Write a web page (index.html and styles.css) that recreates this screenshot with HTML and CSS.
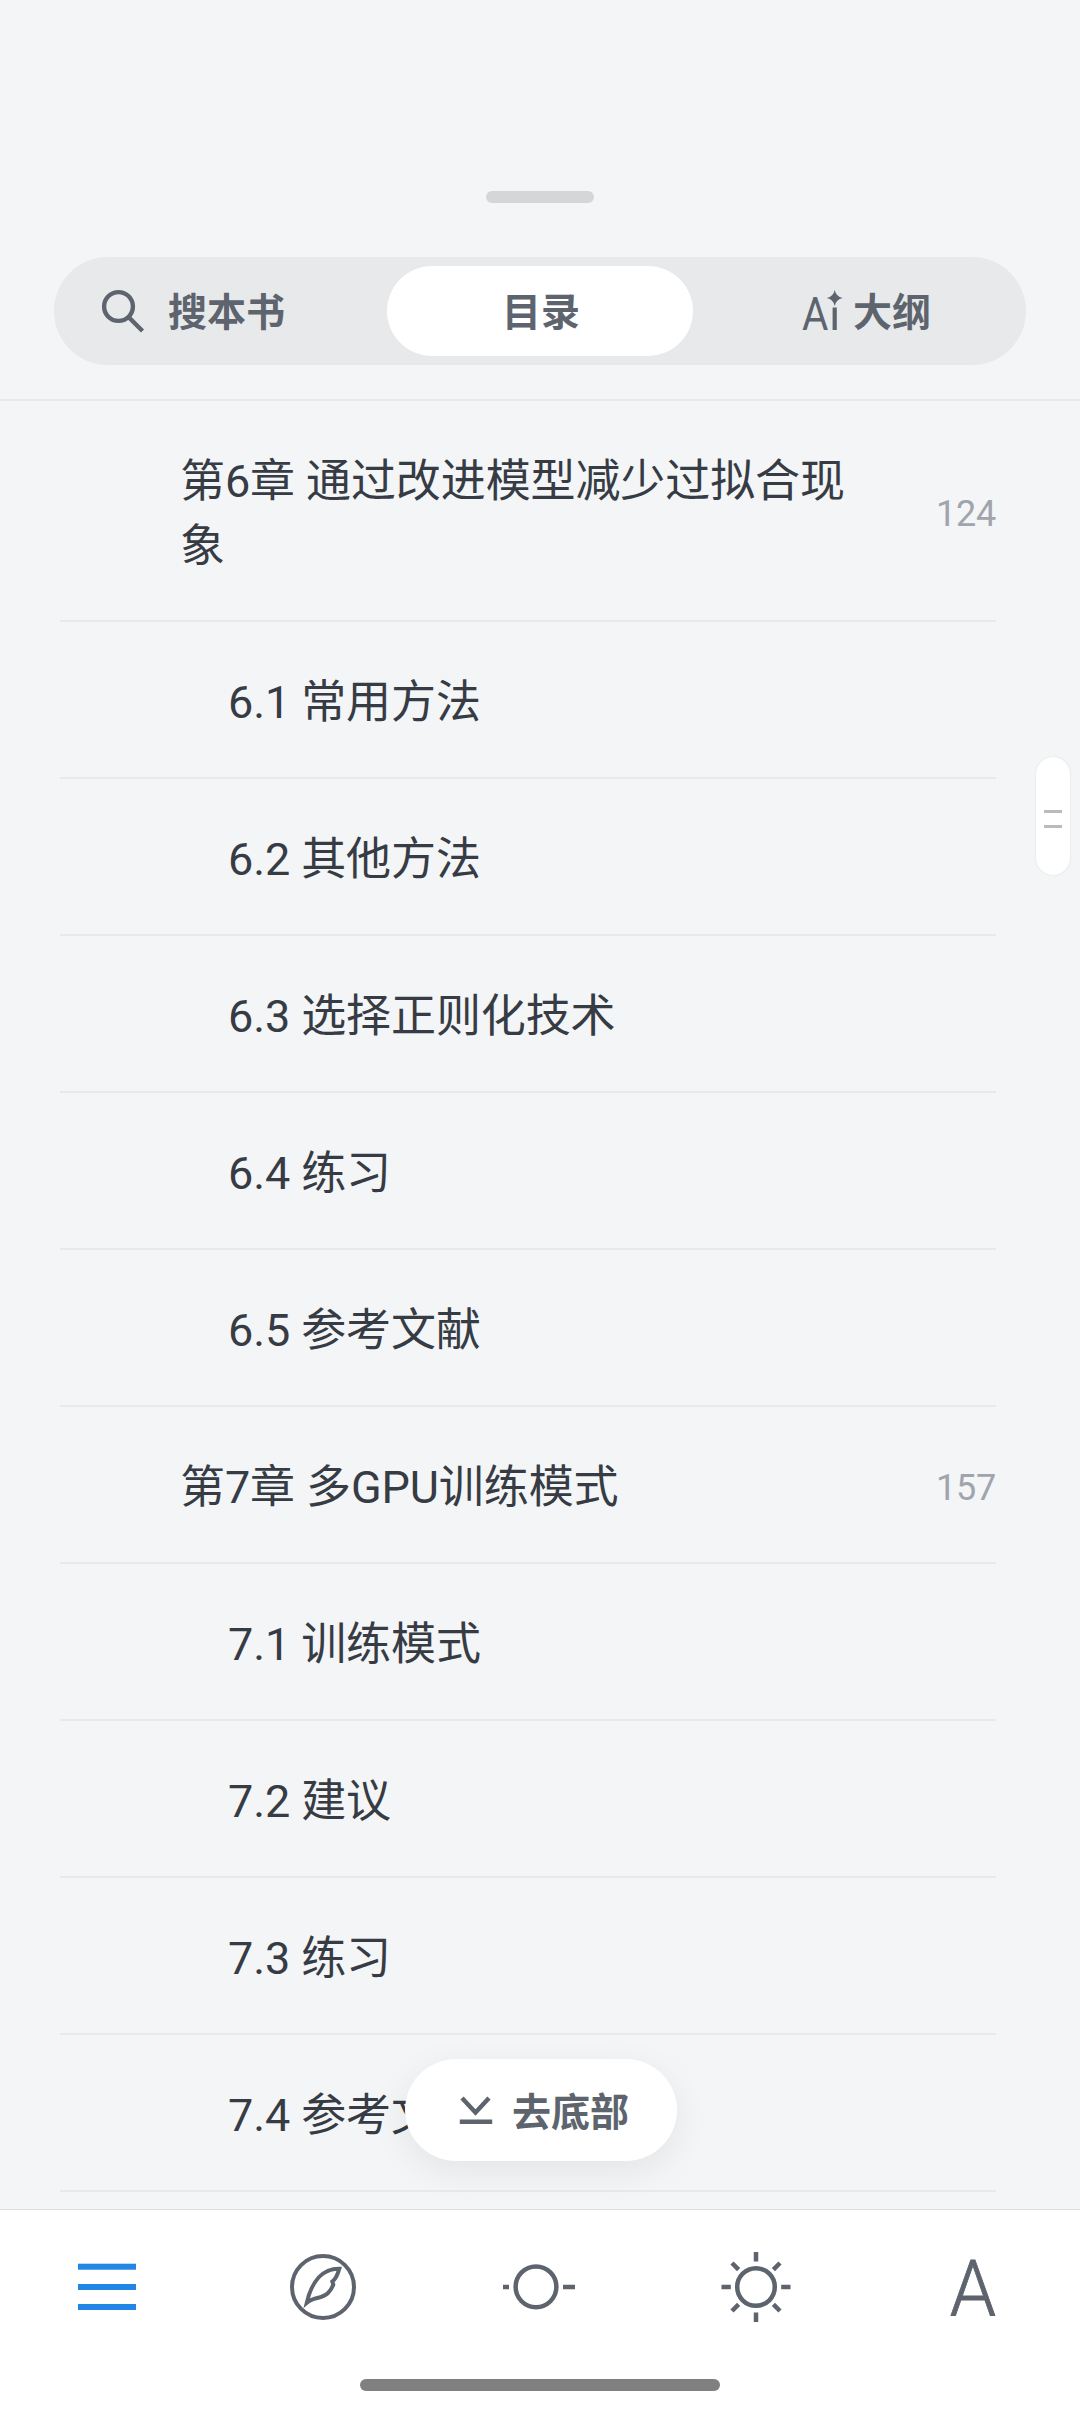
FILE: index.html
```html
<!DOCTYPE html>
<html lang="zh-CN">
<head>
    <meta charset="UTF-8">
    <meta name="viewport" content="width=device-width, initial-scale=1.0">
    <title>目录</title>
    <link rel="stylesheet" href="styles.css">
</head>
<body>

<div class="reader">
    <header class="panel-head">
        <div class="drag-bar"></div>
        <div class="tabs">
            <div class="tab tab-search">
                <svg width="44" height="44" viewBox="0 0 44 44" fill="none" stroke="currentColor" stroke-width="4.4">
                    <circle cx="17.5" cy="17.5" r="14.4"/>
                    <path d="M28 28.5L41.5 42"/>
                </svg>
                <span>搜本书</span>
            </div>
            <div class="tab tab-active"><span>目录</span></div>
            <div class="tab tab-outline">
                <svg width="42" height="42" viewBox="0 0 42 42" fill="currentColor">
                    <text class="ai-letter" transform="translate(14.3 40) scale(.86 1)" text-anchor="middle">A</text>
                    <rect x="31.6" y="17.5" width="4.2" height="22.5"/>
                    <path d="M33.7 0Q35 6.5 41.7 8Q35 9.5 33.7 16Q32.4 9.5 25.8 8Q32.4 6.5 33.7 0z"/>
                </svg>
                <span>大纲</span>
            </div>
        </div>
    </header>

    <main class="toc">
        <div class="toc-row chapter tall">
            <span class="title">第6章 通过改进模型减少过拟合现象</span>
            <span class="page">124</span>
        </div>
        <div class="toc-row section"><span class="title">6.1 常用方法</span></div>
        <div class="toc-row section"><span class="title">6.2 其他方法</span></div>
        <div class="toc-row section"><span class="title">6.3 选择正则化技术</span></div>
        <div class="toc-row section"><span class="title">6.4 练习</span></div>
        <div class="toc-row section"><span class="title">6.5 参考文献</span></div>
        <div class="toc-row chapter">
            <span class="title">第7章 多GPU训练模式</span>
            <span class="page">157</span>
        </div>
        <div class="toc-row section"><span class="title">7.1 训练模式</span></div>
        <div class="toc-row section"><span class="title">7.2 建议</span></div>
        <div class="toc-row section"><span class="title">7.3 练习</span></div>
        <div class="toc-row section"><span class="title">7.4 参考文献</span></div>
    </main>

    <nav class="toolbar">
        <div class="tool tool-on">
            <svg width="108" height="108" viewBox="0 0 108 108" fill="currentColor">
                <rect x="24" y="30.7" width="58" height="6"/>
                <rect x="24" y="51" width="58" height="6"/>
                <rect x="24" y="71" width="58" height="6"/>
            </svg>
        </div>
        <div class="tool">
            <svg width="108" height="108" viewBox="0 0 108 108" fill="none" stroke="currentColor" stroke-width="4">
                <circle cx="53" cy="54" r="31"/>
                <path d="M69.3 35.7C53.5 35.5 42 47 36.8 69.7C44 63.5 51 66.5 58 60C60.5 57.5 62.3 54.5 63.3 51.5L62.3 48.5C65 46.5 67 44 69.3 35.7z"/>
            </svg>
        </div>
        <div class="tool">
            <svg width="108" height="108" viewBox="0 0 108 108" fill="none" stroke="currentColor" stroke-width="4.5">
                <circle cx="50" cy="53.8" r="20.4"/>
                <path d="M17 54H23M77 54H89"/>
            </svg>
        </div>
        <div class="tool">
            <svg width="108" height="108" viewBox="0 0 108 108" fill="none" stroke="currentColor" stroke-width="4.5">
                <circle cx="54" cy="54" r="18.8"/>
                <path d="M54 19V28.5M54 79.5V89M19.5 54H28.8M79.2 54H88.5M30 30L36.6 36.6M71.4 71.4L78 78M30 78L36.6 71.4M71.4 36.6L78 30"/>
            </svg>
        </div>
        <div class="tool">
            <svg width="108" height="108" viewBox="0 0 108 108" fill="currentColor">
                <text class="font-letter" transform="translate(55 83) scale(.95 1)" text-anchor="middle">A</text>
            </svg>
        </div>
    </nav>
    <footer class="home">
        <div class="home-bar"></div>
    </footer>

    <div class="scroll-thumb"><i></i><i></i></div>

    <div class="to-bottom">
        <svg width="34" height="30" viewBox="0 0 34 30" fill="none" stroke="currentColor" stroke-width="4.4">
            <path d="M3 3L16.5 17.5L30 3M.8 26.7H33.2"/>
        </svg>
        <span>去底部</span>
    </div>
</div>

</body>
</html>
```
FILE: styles.css
```css
body {
    margin: 0;
    background: #f3f5f7;
    color: #363b44;
    font-family: Roboto, "Noto Sans CJK SC", sans-serif;
}

svg {
    flex: none;
    overflow: visible;
}

.reader {
    position: relative;
    display: flex;
    flex-direction: column;
    width: 1080px;
    height: 2412px;
    overflow: hidden;
}

/* header */
.panel-head {
    box-sizing: border-box;
    height: 401px;
    padding: 191px 54px 0;
    border-bottom: 2px solid #e8e9eb;
}
.drag-bar {
    width: 108px;
    height: 12px;
    margin: 0 auto 54px;
    border-radius: 6px;
    background: #d5d6d8;
}
.tabs {
    display: grid;
    grid-template-columns: 333px 306px 333px;
    align-items: center;
    height: 108px;
    border-radius: 54px;
    background: #e8e9eb;
}
.tab {
    display: flex;
    align-items: center;
    height: 90px;
    color: #5d646e;
    font-size: 39px;
    font-weight: 700;
}
.tab span {
    padding-bottom: 5px;
}
.tab-search {
    gap: 23px;
    padding-left: 47px;
}
.tab-active {
    justify-content: center;
    border-radius: 45px;
    background: #fff;
}
.tab-active span {
    padding-left: 2px;
}
.tab-outline {
    gap: 10px;
    padding-left: 108px;
}
.ai-letter {
    font-size: 47px;
    font-weight: 400;
}

/* contents list */
.toc {
    flex: 1;
    min-height: 0;
    overflow: hidden;
    padding: 0 84px 0 60px;
}
.toc-row {
    box-sizing: border-box;
    display: flex;
    align-items: center;
    justify-content: space-between;
    height: 157px;
    padding-top: 6px;
    border-bottom: 2px solid #e8e9eb;
}
.tall {
    height: 221px;
}
.chapter {
    padding-left: 120px;
}
.section {
    padding-left: 168px;
}
.title {
    max-width: 690px;
    font-size: 45px;
    line-height: 65px;
    letter-spacing: -.1px;
}
.page {
    color: #a0a4ac;
    font-size: 36px;
    letter-spacing: -.2px;
}

/* bottom toolbar */
.toolbar {
    box-sizing: border-box;
    display: grid;
    grid-template-columns: repeat(5, 1fr);
    justify-items: center;
    height: 170px;
    padding-top: 23px;
    border-top: 1px solid #dcdddf;
    background: #fff;
}
.tool {
    color: #5d646e;
}
.tool-on {
    color: #2186e6;
}
.tool svg {
    display: block;
}
.font-letter {
    font-size: 78px;
    font-weight: 300;
    stroke: currentColor;
    stroke-width: .8px;
}
.home {
    height: 33px;
    background: #fff;
}
.home-bar {
    width: 360px;
    height: 12px;
    margin: 0 auto;
    border-radius: 6px;
    background: #808080;
}

/* floating controls over the list */
.scroll-thumb {
    position: absolute;
    top: 757px;
    left: 1036px;
    box-sizing: border-box;
    display: flex;
    flex-direction: column;
    justify-content: center;
    align-items: center;
    gap: 12px;
    width: 34px;
    height: 118px;
    padding-top: 5px;
    border-radius: 17px;
    background: #fff;
    box-shadow: 0 0 2px rgba(0, 0, 0, .12);
}
.scroll-thumb i {
    width: 18px;
    height: 3px;
    background: #bbb;
}
.to-bottom {
    position: absolute;
    top: 2059px;
    left: 405px;
    box-sizing: border-box;
    display: flex;
    align-items: center;
    gap: 19px;
    width: 272px;
    height: 102px;
    padding-left: 54px;
    border-radius: 51px;
    background: #fff;
    box-shadow: 0 10px 36px rgba(0, 0, 0, .07);
    color: #5d646e;
    font-size: 39px;
    font-weight: 700;
}
.to-bottom span {
    padding-bottom: 2px;
}
```
